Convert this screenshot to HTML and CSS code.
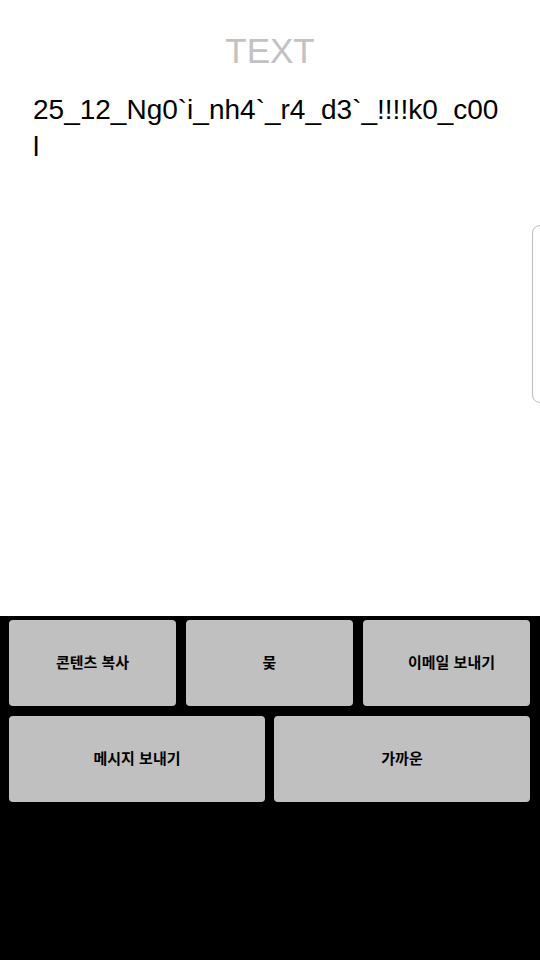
FILE: index.html
```html
<!DOCTYPE html>
<html lang="ko">
  <head>
    <meta charset="utf-8" />
    <meta name="viewport" content="initial-scale=1, width=device-width" />
    <title>TEXT</title>
    <link rel="stylesheet" href="styles.css">
  </head>
  <body>
    <main class="content">
      <h1 class="title">TEXT</h1>
      <p class="text">25_12_Ng0`i_nh4`_r4_d3`_!!!!k0_c00l</p>
      <div class="handle"></div>
    </main>
    <footer class="actions">
      <div class="row">
        <button class="action">콘텐츠 복사</button>
        <button class="action">뭊</button>
        <button class="action"><span class="shift">이메일 보내기</span></button>
      </div>
      <div class="row row-wide">
        <button class="action">메시지 보내기</button>
        <button class="action">가까운</button>
      </div>
    </footer>
  </body>
</html>
```

FILE: styles.css
```css
body {
  margin: 0;
  width: 540px;
  height: 960px;
  display: flex;
  flex-direction: column;
  background-color: #000;
  font-family: "Liberation Sans", "Noto Sans CJK KR", sans-serif;
}
.content {
  position: relative;
  height: 616px;
  background-color: #fff;
  padding: 0 40px 0 33px;
  box-sizing: border-box;
}
.title {
  margin: 0;
  padding-top: 31px;
  padding-left: 7px;
  text-align: center;
  font-size: 35px;
  font-weight: 400;
  line-height: 40px;
  color: #c2c2c2;
}
.text {
  margin: 0;
  padding-top: 20px;
  font-size: 28px;
  line-height: 37px;
  color: #000;
  word-break: break-all;
}
.handle {
  position: absolute;
  right: -2px;
  top: 225px;
  width: 8px;
  height: 176px;
  border: 1px solid #bdbdbd;
  border-radius: 8px 0 0 8px;
  background-color: #fff;
}
.actions {
  flex: 1;
  padding: 4px 10px 0 9px;
  display: flex;
  flex-direction: column;
  gap: 10px;
}
.row {
  display: grid;
  grid-template-columns: repeat(3, 1fr);
  gap: 10px;
}
.row-wide {
  grid-template-columns: repeat(2, 1fr);
  gap: 9px;
}
.action {
  height: 86px;
  border: none;
  border-radius: 4px;
  background-color: #c0c0c0;
  color: #000;
  font-family: "Noto Sans CJK KR", sans-serif;
  font-size: 15px;
  font-weight: 700;
  padding: 0 0 4px;
}
.shift {
  margin-left: 10px;
}
```
